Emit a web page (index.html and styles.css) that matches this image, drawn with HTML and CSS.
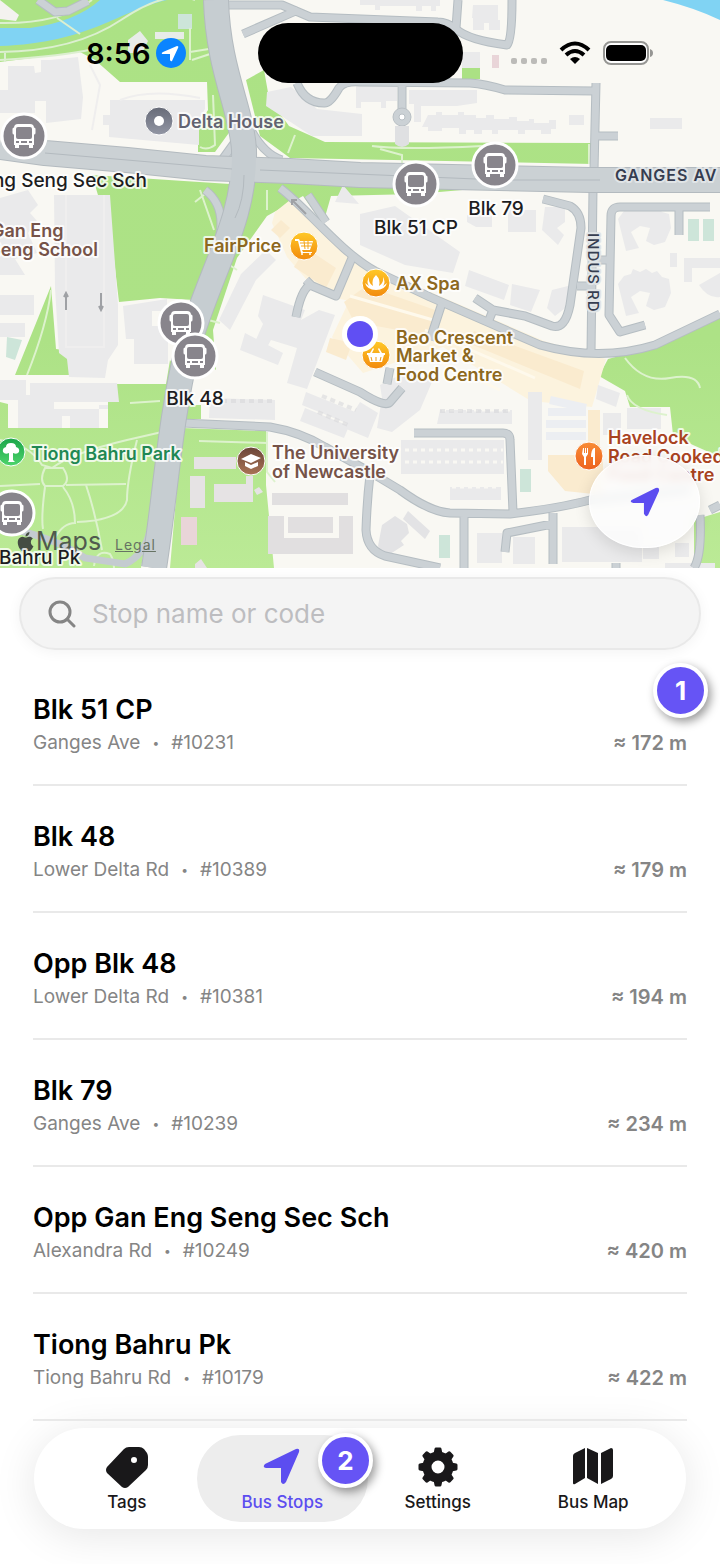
FILE: index.html
```html
<!DOCTYPE html>
<html lang="en">
<head>
    <meta charset="UTF-8">
    <meta name="viewport" content="width=device-width, initial-scale=1.0">
    <title>Bus Stops</title>
    <link rel="stylesheet" href="styles.css">
</head>
<body>
    <header class="map">
        <svg class="map-canvas" viewBox="0 0 720 568" role="img" aria-label="Map of nearby bus stops">
            <defs>
                <linearGradient id="gold" x2="0" y2="1"><stop stop-color="#ffc928"/><stop offset="1" stop-color="#f28a0d"/></linearGradient>
                <linearGradient id="slate" x2="0" y2="1"><stop stop-color="#676b78"/><stop offset="1" stop-color="#9296a4"/></linearGradient>
                <linearGradient id="brown" x2="0" y2="1"><stop stop-color="#6a4438"/><stop offset="1" stop-color="#a97455"/></linearGradient>
                <linearGradient id="orange" x2="0" y2="1"><stop stop-color="#f88c35"/><stop offset="1" stop-color="#ee621f"/></linearGradient>
                <linearGradient id="tree" x2="0" y2="1"><stop stop-color="#1ba54a"/><stop offset="1" stop-color="#4ed46b"/></linearGradient>
                <linearGradient id="park" gradientUnits="userSpaceOnUse" x2="0" y2="568"><stop stop-color="#ace285"/><stop offset=".6" stop-color="#ade286"/><stop offset="1" stop-color="#bbea96"/></linearGradient>
                <g id="bus">
                    <circle r="22" fill="#88858c" stroke="#fff" stroke-width="3"/>
                    <path d="M-10-7v4M10-7v4" stroke="#fff" stroke-width="3" stroke-linecap="round"/>
                    <path d="M-6-12H6q4 0 4 4V9H9v3H5V9H-5v3h-4V9h-1V-8q0-4 4-4Z" fill="#fff"/>
                    <rect x="-8" y="-9" width="16" height="12" rx="2" fill="#88858c"/>
                    <path d="M-8 6h3m2 0h6m2 0h3" stroke="#88858c" stroke-width="2"/>
                </g>
                <g id="tower">
                    <path d="M-25-16l6-8 7-2 2-5 7 3 6-3 6 4 5-2 5 6 7 2 2 14-6 14-11 3-8-4 4-13-10-2-9 6 8 16-13 3Z"/>
                </g>
            </defs>

            <rect width="720" height="568" fill="#f9f8f3"/>

            <!-- parks -->
            <g fill="url(#park)">
                <path d="M0 0H206L214 60 220 82H120L95 60 80 52 0 62Z"/>
                <path d="M207 82h14l10 48-16 22h-17v-27l10-15Z"/>
                <path d="M246 80l18-10 5 28 20 28 36 16 268 1v21l-303-6-30-22Z"/>
                <path d="M92 175l138 9-8 40-28 76-34-2-41 4-7-60Z"/>
                <path d="M252 182h222v7l-58 5-85 2-8 28-20-28-36 20-30 42-24 72 3 40-18-15 20-100Z"/>
                <path d="M51 286L15 375h54l1-24-14-2Z"/>
                <path d="M0 402l8 2v24h100v-44h58l4-24 6 10-35 198H0Z"/>
                <path d="M184 405h17v14h-18ZM182 428l84 3v54l8 83H170Z"/>
                <path d="M720 316c-30 18-60 30-112 43l-9 17 26 15 5 16h40l3 28 20 10 27 12ZM694 520l26-8v56h-26Z"/>
            </g>
            <path d="M0 0l19 15-3 6-16-2Z" fill="#f4f2ef"/>

            <!-- water -->
            <path d="M0 28h30Q75 22 100 0h67C120 10 90 43 0 46ZM663 0h57v20Q695 8 663 0Z" fill="#80d3f3"/>
            <path d="M57 18L80 34M0 23Q60 24 92 0M0 52Q75 51 121 20T195 0M0 60Q65 56 93 49M5 51v11" fill="none" stroke="#dcefd0" stroke-width="2"/>

            <!-- shopping and food area -->
            <path d="M275 212l15-12 64 59 190 82 62 18-14 48-61-6-88-54-80 26-31-36 17-36-30-7-32-37-15-34Z" fill="#fcf3de"/>
            <g fill="#faebcf">
                <path d="M281 220l9 8-10 10-9-8ZM306 248l30 20-10 20-32-21ZM344 302l22-16 75 26-10 24-77-14ZM474 331l110 40-4 18-112-46ZM330 338l22 5-6 17-20-8Z"/>
                <path d="M548 455h55v40l-38-4-17-20ZM588 410h12v42h-12Z"/>
            </g>
            <path d="M425 330l110 48M440 362l60 28M350 296l90 26" stroke="#fef9ec" stroke-width="3"/>

            <!-- buildings -->
            <g fill="#eaeaeb">
                <path d="M50 60l28-3 5 40-2 22-35 4v-22H35v12H0V90h8V66h26l1 7 6-1V60Z"/>
                <path d="M110 100h95v9l-6 10v26l-90-8v-12h-6v-10h7Z"/>
                <path d="M267 92l24-5 26 22 45 5v22h-50l-46-30Z"/>
                <path d="M360 0h80v6h-4v5h-5V6h-9v5h-6V6h-36v4h-5V5h-15ZM473 5h25v15h2v10h-11v-7h-5v7h-11V18h-1ZM360 86h37v15h-11v7h-5v-6h-20v6h-5V86Z"/>
                <path d="M415 90h62v13l-20 3h-36v16h-7v-18h-5V90ZM428 115h8v-3h6v3h16v-3h6v3h12v3h10v-3h8v4h15v-2h8v4h12v-2h5v4h15v-3h7v9h-5v5h-10v-4h-16v4h-7v-4h-20v4h-6v-4h-10v4h-8v-4h-8v4h-7v-6h-17v3h-14v-4h-6ZM569 115h15v10h-15ZM650 118h32v11h-32ZM462 52h18v16h-18Z"/>
                <path d="M360 214l35-8 65 46-7 21-48-8-45-20ZM343 185l16 19-24-2ZM467 215h25v12h-16l-9-5ZM508 210h28v22h-28ZM545 207h20v15l-8 6 7 7-6 10-16-15ZM469 270l40 15-5 15-39-14ZM512 284l28 6-9 22-21-7ZM552 290l16-4v20l-13 10-8-8Z"/>
                <path d="M0 198l28-8 10 15-8 8 7 8-9 12 9 20-22 6 10 16H0ZM0 295h34v20H0ZM0 323h25v14H0Z"/>
                <path d="M54 195h56l8 110v40l-10 15-3 18-36-1-2-18-8-6-4-65ZM123 306l44-7v12h-15v15h16v38h-34v-25h-8Z"/>
                <path d="M0 380h26v20H0ZM18 395h36v14h54v-4h-9v23H70v-12h-8v12H18ZM30 383h87l2 19H30Z"/>
                <path d="M241 274l25-24 10 10-20 20-26 50-11-10ZM263 295l42 15-4 10 18-10 16 5-28 74-20-6 10-35-26-8-5 9-12-5 9-20-5-8ZM245 333l38 20-5 12-38-15ZM210 398l65 2v20l-66-2Z"/>
                <path d="M306 392l54 22-4 13-54-22ZM305 408l44 18-5 12-44-17ZM380 385l30-15 22 12-12 28-28 22-15-4 5-30ZM360 402l18 11-10 25-24-10ZM440 410h72v14h-75ZM401 440h103v34h-103ZM450 487h51v13h-51ZM528 392h14v68h-14ZM598 385l22 8-4 14-20-8ZM603 413h18v22h-18ZM627 408h34v21h-34Z"/>
                <path d="M562 527h80v35h-80ZM477 533h25v30h-25ZM513 537h22v27h-22ZM643 545h16v14h-16ZM675 543h14v14h-14ZM665 563h50v5h-50Z"/>
                <path d="M684 258h36v10h-28v14h-8ZM699 285l21-12v24q-12 2-21-12ZM670 253h7v14h-7Z"/>
                <use href="#tower" x="643" y="235"/>
                <use href="#tower" x="643" y="300"/>
            </g>
            <g fill="#e3e3e5">
                <path d="M194 457h42v12h-42ZM190 476h15v32h-15ZM214 484h32v-8h7v26h-39ZM254 490l5-3 4 5-6 3ZM195 564l6-5 6 9h-12Z" fill="#e6e3e4"/>
                <path d="M272 493h76v12h-76ZM268 516h16v22h55v-22h14v38h-85ZM288 517h45v16h-45Z" fill="#e1dfe0"/>
                <path d="M382 525l13-9 12 8 2 9-8 8 3 4-20 13-6-12ZM408 511l22 20-5 8-22-20Z"/>
            </g>
            <path d="M462 68h18v11h-18Z" fill="#abe184"/>
            <path d="M492 55h7v13h-7ZM181 517h16v28h-16Z" fill="#e9d5d8"/>
            <path d="M7 337l15 3-7 20-9-3ZM688 219h11v22h-11ZM703 219h11v22h-11ZM520 469h11v23h-11ZM439 535h11v23h-11ZM178 14h14v15h-14Z" fill="#cde5d9"/>
            <path d="M155 32h29v7h-29ZM128 40l12-9 8 10-6 12h-14Z" fill="#e8ece8"/>
            <path d="M66 195v152h38V195M120 100q30-12 80-2M90 65l10 20-8 45" fill="none" stroke="#efeeee" stroke-width="2"/>
            <path d="M442 410h70M405 450h98M405 462h98M452 487h48" stroke="#f9f8f3" stroke-width="3" stroke-dasharray="4 4"/>
            <path d="M322 396l34 14M318 412l30 13M213 401h60M440 411h70" stroke="#d9d9dc" stroke-width="4" stroke-dasharray="5 4" opacity=".6"/>
            <path d="M550 400l36 8M548 412h38M546 424h40M546 436h40" stroke="#eceef2" stroke-width="8"/>

            <!-- footpaths -->
            <g fill="none" stroke="#ddf2cd" stroke-width="2">
                <path d="M0 440q30 5 42 25l10 3q20-15 75-28l35-8M45 468q-6 12 0 18h18q8-6 0-18ZM0 486l40-2M66 485l60-1M45 487q-4 30-2 42M63 487q12 15 12 36-12 0-20 15M86 485q10 30 16 65M137 440q-10 40-10 60-4 20-50 22M94 566q2-17 16-12 4 6 4 14M199 441l68 2M267 432v40l8 10"/>
                <path d="M200 190l14 40M195 202l10-8M130 403l30-2M27 375q20-50 24-85M267 190v20M225 262l12 8M208 320l12 3M627 395q5 15 40 20M625 358q18 25 45 20t30 10M213 95l2 50q-8 6-15 2"/>
                <path d="M372 146q30 4 110 0M480 146v18M380 149l22 6v8M295 135l-7 18M589 144v20M155 143M190 28v32M190 52l25-4M192 60l24-8"/>
            </g>

            <!-- minor roads -->
            <g class="road-edge">
                <path d="M38 0L55 12 68 11 88 1M228 5H282L310 17 438 22Q447 22 456 29 468 40 507 45 512 40 512 0M458 0L456 28M243 34L298 10"/>
                <path d="M297 83Q305 103 324 103 330 104 339 88 344 81 360 82L470 83Q485 84 505 90L595 91M596 83L594 170M596 136H618M402 83V112"/>
                <path d="M593 188L591 354M280 188C305 206 340 252 375 271L430 297 540 345Q600 362 655 345L720 314"/>
                <path d="M543 199L570 206Q581 212 581 228L570 305Q565 330 552 326L525 316 493 310 475 298M493 310L487 325M577 286H592M710 207H620Q611 207 611 216L609 315 620 332 645 325M593 260H610M679 208V235"/>
                <path d="M442 303L430 340M390 368L387 384M352 258L336 296 310 285Q301 290 296 317M306 280L313 287M315 372L360 392Q385 408 390 402L402 388"/>
                <path d="M182 423L270 427Q300 432 325 447L370 472 400 490Q430 512 450 513L510 514Q560 508 590 500L690 490M414 433H503Q510 433 510 440L513 512M464 513V568M370 475Q367 500 366 530 367 550 385 556L440 568M553 513V564M505 552L507 533 552 524M616 563v5M720 505L710 510M694 568Q702 555 700 515"/>
                <path d="M205 190Q225 205 220 235M308 195L326 222M222 160L240 135M252 132Q265 155 282 160"/>
            </g>
            <g class="road">
                <path d="M38 0L55 12 68 11 88 1M228 5H282L310 17 438 22Q447 22 456 29 468 40 507 45 512 40 512 0M458 0L456 28M243 34L298 10"/>
                <path d="M297 83Q305 103 324 103 330 104 339 88 344 81 360 82L470 83Q485 84 505 90L595 91M596 83L594 170M596 136H618M402 83V112"/>
                <path d="M593 188L591 354M280 188C305 206 340 252 375 271L430 297 540 345Q600 362 655 345L720 314"/>
                <path d="M543 199L570 206Q581 212 581 228L570 305Q565 330 552 326L525 316 493 310 475 298M493 310L487 325M577 286H592M710 207H620Q611 207 611 216L609 315 620 332 645 325M593 260H610M679 208V235"/>
                <path d="M442 303L430 340M390 368L387 384M352 258L336 296 310 285Q301 290 296 317M306 280L313 287M315 372L360 392Q385 408 390 402L402 388"/>
                <path d="M182 423L270 427Q300 432 325 447L370 472 400 490Q430 512 450 513L510 514Q560 508 590 500L690 490M414 433H503Q510 433 510 440L513 512M464 513V568M370 475Q367 500 366 530 367 550 385 556L440 568M553 513V564M505 552L507 533 552 524M616 563v5M720 505L710 510M694 568Q702 555 700 515"/>
                <path d="M205 190Q225 205 220 235M308 195L326 222M222 160L240 135M252 132Q265 155 282 160"/>
            </g>
            <circle cx="402" cy="117" r="9" fill="#cbd1d5" stroke="#b8bfc4"/>
            <circle cx="402" cy="117" r="3" fill="#fff" stroke="#b8bfc4"/>
            <path d="M395 126h14v18q-7 6-14 0Z" fill="#dfe0e2"/>
            <path d="M0 527Q50 535 85 558L125 564Q145 555 150 530" fill="none" stroke="#c4cbd0" stroke-width="7"/>

            <!-- main roads -->
            <g fill="none" stroke-linejoin="round">
                <path d="M0 147L45 153 127 160 205 168 290 171 360 175 590 180H720" stroke="#b3babf" stroke-width="26"/>
                <path d="M216 0C218 70 242 110 244 150 246 220 210 270 187 350 170 420 166 490 154 568" stroke="#b3babf" stroke-width="26"/>
                <path d="M0 147L45 153 127 160 205 168 290 171 360 175 590 180H720" stroke="#cbd1d4" stroke-width="24"/>
                <path d="M216 0C218 70 242 110 244 150 246 220 210 270 187 350 170 420 166 490 154 568" stroke="#c6cdd1" stroke-width="24"/>
                <path d="M45 153L127 160 232 169M260 170L500 180H600M244 175Q244 200 235 218" stroke="#b3babf"/>
            </g>
            <path d="M66 310v-17m-2 4l2-4 2 4M101 293v17m-2-4l2 4 2-4M306 214l-14-14m0 5v-5h5" fill="none" stroke="#9fa1a5" stroke-width="2"/>

            <!-- street names -->
            <text class="street" x="615" y="181">GANGES AV</text>
            <text class="street small" transform="translate(588 233) rotate(90)">INDUS RD</text>

            <!-- places -->
            <g stroke="#fff" stroke-width="1">
                <circle cx="159" cy="121" r="14" fill="url(#slate)"/>
                <circle cx="304" cy="246" r="14" fill="url(#gold)"/>
                <circle cx="376" cy="283" r="14" fill="url(#gold)"/>
                <circle cx="376" cy="355" r="14" fill="url(#gold)"/>
                <circle cx="251" cy="461" r="14" fill="url(#brown)"/>
                <circle cx="589" cy="456" r="14" fill="url(#orange)"/>
                <circle cx="11" cy="452" r="14" fill="url(#tree)"/>
            </g>
            <g fill="#fff">
                <circle cx="159" cy="121" r="5"/>
                <path d="M295 239h4l1 2h13l-3 9h-8l1 2h9v1h-11l-3-12h-3Z"/>
                <circle cx="302" cy="254" r="1"/><circle cx="310" cy="254" r="1"/>
                <path d="M376 275q5 5 3 11 5-3 4-9 3 5 0 9l4-3q-2 7-11 7t-11-7l4 3q-3-4 0-9-1 6 4 9-2-6 3-11Z"/>
                <path d="M367 353h3l3-5 1 1-2 4h8l-2-4 1-1 3 5h3v2h-1l-2 7h-12l-2-7h-1Z"/>
                <path d="M241 459l10-5 10 4-10 5ZM245 462l6 3 7-3v4l-7 3-6-3Z"/>
                <path d="M583 448h1v5h1v-5h1v5h1v-5h1v6l-2 3v8h-2v-8l-2-3ZM594 448q-3 2-3 9h2v8h2v-17Z"/>
                <path d="M3 452q-1-4 3-5 0-4 5-4t5 4q4 1 3 5-2 3-6 1v7l2 2H8l1-2v-7q-4 2-6-1Z"/>
            </g>
            <path d="M300 243h12m-11 3h10m-7-5l1 8m3-8v8" stroke="#f3a51b" fill="none"/>
            <path d="M371 357l1 4m4-4v4m5-4l-1 4" stroke="#ee9a14"/>

            <g class="place">
                <text x="178" y="128" fill="#626371">Delta House</text>
                <text x="204" y="252" fill="#8d6820">FairPrice</text>
                <text x="396" y="290" fill="#8d6820">AX Spa</text>
                <text fill="#8d6820"><tspan x="396" y="344">Beo Crescent</tspan><tspan x="396" y="362">Market &amp;</tspan><tspan x="396" y="381">Food Centre</tspan></text>
                <text fill="#765349"><tspan x="-9" y="237">Gan Eng</tspan><tspan x="-11" y="256">Seng School</tspan></text>
                <text x="31" y="460" fill="#1f8853">Tiong Bahru Park</text>
                <text fill="#765349"><tspan x="272" y="459">The University</tspan><tspan x="272" y="478">of Newcastle</tspan></text>
                <text fill="#a9431f"><tspan x="608" y="444">Havelock</tspan><tspan x="608" y="463">Road Cooked</tspan><tspan x="608" y="481">Food Centre</tspan></text>
            </g>

            <!-- bus stops -->
            <use href="#bus" x="24" y="136"/>
            <use href="#bus" x="416" y="184"/>
            <use href="#bus" x="495" y="165"/>
            <use href="#bus" x="181" y="323"/>
            <use href="#bus" x="195" y="356"/>
            <use href="#bus" x="12" y="513"/>
            <g class="stop">
                <text x="147" y="187" text-anchor="end">Gan Eng Seng Sec Sch</text>
                <text x="416" y="234" text-anchor="middle">Blk 51 CP</text>
                <text x="496" y="215" text-anchor="middle">Blk 79</text>
                <text x="195" y="405" text-anchor="middle">Blk 48</text>
            </g>
            <circle cx="360" cy="334" r="18" fill="#fff"/>
            <circle cx="360" cy="334" r="13" fill="#604ff3"/>

            <!-- map provider -->
            <path transform="translate(16 532) scale(.8)" fill="#454c43" d="M12.152 6.896c-.948 0-2.415-1.078-3.96-1.04-2.04.027-3.91 1.183-4.961 3.014-2.117 3.675-.546 9.103 1.519 12.09 1.013 1.454 2.208 3.09 3.792 3.039 1.52-.065 2.09-.987 3.935-.987 1.831 0 2.35.987 3.96.948 1.637-.026 2.676-1.48 3.676-2.948 1.156-1.688 1.636-3.325 1.662-3.415-.039-.013-3.182-1.221-3.22-4.857-.026-3.04 2.48-4.494 2.597-4.559-1.429-2.09-3.623-2.324-4.39-2.376-2-.156-3.675 1.09-4.61 1.09zM15.53 3.83c.843-1.012 1.4-2.427 1.245-3.83-1.207.052-2.662.805-3.532 1.818-.78.896-1.454 2.338-1.273 3.714 1.338.104 2.715-.688 3.559-1.701"/>
            <text class="provider" x="36" y="550">Maps</text>
            <text class="stop" x="-1" y="564">Bahru Pk</text>
        </svg>

        <div class="status">
            <div class="clock">
                <span>8:56</span>
                <svg width="30" height="30" viewBox="0 0 30 30"><circle cx="15" cy="15" r="15" fill="#0a84ff"/><path d="M6 16Q5 15 7 14L21 8q2 0 1 2l-6 13q-1 1-2-1v-6Z" fill="#fff"/></svg>
            </div>
            <div class="island"></div>
            <div class="signals">
                <svg width="36" height="8" viewBox="0 0 36 8" fill="#bcbbb8"><rect y="1" width="6" height="6" rx="2"/><rect x="10" y="1" width="6" height="6" rx="2"/><rect x="20" y="1" width="6" height="6" rx="2"/><rect x="30" y="1" width="6" height="6" rx="2"/></svg>
                <svg width="32" height="24" viewBox="0 0 32 24" fill="none" stroke="#000" stroke-width="4"><path d="M2 9Q16-4 30 9M7 14q9-8 18 0"/><path d="M11 18q5-4 10 0l-5 5Z" fill="#000" stroke="none"/></svg>
                <svg width="51" height="24" viewBox="0 0 51 24"><rect x="1" y="1" width="44" height="22" rx="7" fill="#fff" stroke="#969693" stroke-width="2"/><rect x="3" y="4" width="40" height="16" rx="5"/><path d="M47 8q3 1 3 4t-3 4Z" fill="#969693"/></svg>
            </div>
        </div>
        <a class="legal" href="#legal">Legal</a>
        <button class="locate" type="button" aria-label="My location">
            <svg width="30" height="30" viewBox="0 0 28 28"><path d="M2 12L24 1q4-1 3 3L17 26q-2 3-4-1V15H3q-4-1-1-3Z" fill="#5c4df0"/></svg>
        </button>
    </header>

    <main>
        <label class="search">
            <svg width="28" height="28" viewBox="0 0 28 28" fill="none" stroke="#858585" stroke-width="3" stroke-linecap="round"><circle cx="12" cy="12" r="10"/><path d="M19 19l7 7"/></svg>
            <input type="search" placeholder="Stop name or code" aria-label="Stop name or code">
        </label>
        <ul class="stops">
            <li class="stop-row">
                <h2>Blk 51 CP</h2>
                <p><span>Ganges Ave</span><i>•</i><span>#10231</span><b>≈ 172 m</b></p>
                <span class="badge badge-list">1</span>
            </li>
            <li class="stop-row">
                <h2>Blk 48</h2>
                <p><span>Lower Delta Rd</span><i>•</i><span>#10389</span><b>≈ 179 m</b></p>
            </li>
            <li class="stop-row">
                <h2>Opp Blk 48</h2>
                <p><span>Lower Delta Rd</span><i>•</i><span>#10381</span><b>≈ 194 m</b></p>
            </li>
            <li class="stop-row">
                <h2>Blk 79</h2>
                <p><span>Ganges Ave</span><i>•</i><span>#10239</span><b>≈ 234 m</b></p>
            </li>
            <li class="stop-row">
                <h2>Opp Gan Eng Seng Sec Sch</h2>
                <p><span>Alexandra Rd</span><i>•</i><span>#10249</span><b>≈ 420 m</b></p>
            </li>
            <li class="stop-row">
                <h2>Tiong Bahru Pk</h2>
                <p><span>Tiong Bahru Rd</span><i>•</i><span>#10179</span><b>≈ 422 m</b></p>
            </li>
        </ul>
    </main>

    <nav class="tabs">
        <a class="tab" href="#tags">
            <svg width="44" height="44" viewBox="0 0 44 44"><path fill="#19181a" fill-rule="evenodd" d="M24 2h10q3 0 5 2l3 4q1 2 1 4v8q0 3-2 5L23 42q-3 2-6 0L2 28q-2-3 0-6L19 4q2-2 5-2Zm5 10a3 3 0 1 0 0 6 3 3 0 0 0 0-6Z"/></svg>
            <span>Tags</span>
        </a>
        <a class="tab active" href="#stops">
            <svg width="44" height="44" viewBox="0 0 44 44"><path fill="#5c4df0" d="M5 19L36 4q4-1 3 3L26 37q-3 4-5 0V23H6q-4-1-1-4Z"/></svg>
            <span>Bus Stops</span>
            <span class="badge badge-tab">2</span>
        </a>
        <a class="tab" href="#settings">
            <svg width="44" height="44" viewBox="0 0 44 44" fill="#19181a"><g stroke="#19181a" stroke-width="3" stroke-linejoin="round"><path id="tooth" d="M19 9l1-5h4l1 5Z"/><use href="#tooth" transform="rotate(45 22 22)"/><use href="#tooth" transform="rotate(90 22 22)"/><use href="#tooth" transform="rotate(135 22 22)"/><use href="#tooth" transform="rotate(180 22 22)"/><use href="#tooth" transform="rotate(225 22 22)"/><use href="#tooth" transform="rotate(270 22 22)"/><use href="#tooth" transform="rotate(315 22 22)"/></g><circle cx="22" cy="22" r="11" fill="none" stroke="#19181a" stroke-width="9"/></svg>
            <span>Settings</span>
        </a>
        <a class="tab" href="#map">
            <svg width="44" height="44" viewBox="0 0 44 44" fill="#19181a"><path d="M2 11q0-2 2-3l10-5v30L4 39q-2 1-2-1ZM16 3l11 5v31l-11-6ZM30 8l10-5q2 0 2 2v26q0 2-2 3l-10 5Z"/></svg>
            <span>Bus Map</span>
        </a>
    </nav>
</body>
</html>
```
FILE: styles.css
```css
* {
    margin: 0;
    padding: 0;
    box-sizing: border-box;
}
body {
    background: #fff;
    color: #000;
    font-family: Inter, Roboto, sans-serif;
    overflow-x: hidden;
}
.map {
    position: relative;
}
.map-canvas {
    display: block;
    width: 100%;
}
.road-edge, .road {
    fill: none;
    stroke: #b5bdc2;
    stroke-width: 9px;
    stroke-linejoin: round;
}
.road {
    stroke: #cbd1d5;
    stroke-width: 7px;
}
.street, .place, .stop {
    font-size: 18px;
    font-weight: 600;
    paint-order: stroke;
    stroke: rgba(255, 255, 255, 0.8);
    stroke-width: 4px;
    stroke-linejoin: round;
}
.street {
    font-size: 16px;
    fill: #363d50;
    stroke: #e0e4e6;
    letter-spacing: 1px;
}
.small {
    font-size: 15px;
    font-weight: 500;
}
.stop {
    font-size: 19px;
    font-weight: 500;
    fill: #1d1d1f;
}
.provider {
    font-size: 25px;
    fill: #505a4e;
}
.status {
    position: absolute;
    top: 23px;
    left: 0;
    width: 100%;
    display: grid;
    grid-template-columns: 1fr 205px 1fr;
    align-items: center;
}
.clock, .signals {
    display: flex;
    align-items: center;
}
.clock {
    justify-content: flex-end;
    gap: 5px;
    padding-right: 72px;
    font-size: 29px;
    font-weight: 600;
}
.island {
    height: 60px;
    border-radius: 30px;
    background: #000;
}
.signals {
    gap: 12px;
    padding-left: 48px;
}
.signals svg:first-child {
    align-self: flex-end;
}
.legal {
    position: absolute;
    left: 115px;
    bottom: 15px;
    color: #667363;
    font-size: 14px;
    letter-spacing: 1px;
}
.locate {
    position: absolute;
    right: 20px;
    bottom: 20px;
    width: 111px;
    height: 93px;
    display: flex;
    align-items: center;
    justify-content: center;
    border: 1px solid #fff;
    border-radius: 54px / 46px;
    background: rgba(253, 253, 253, 0.85);
    backdrop-filter: blur(5px);
    box-shadow: 0 4px 16px rgba(0, 0, 0, 0.12);
}
.search {
    display: flex;
    align-items: center;
    gap: 16px;
    height: 73px;
    margin: 9px 19px;
    padding: 0 27px;
    border: 2px solid #e9e9e9;
    border-radius: 37px;
    background: #f4f4f4;
    box-shadow: 0 2px 14px rgba(0, 0, 0, 0.05);
}
.search input {
    flex: 1;
    min-width: 0;
    border: 0;
    outline: 0;
    background: none;
    font: 26px Inter, Roboto, sans-serif;
}
.search input::placeholder {
    color: #bdbdc0;
}
.stops {
    list-style: none;
    padding: 0 33px;
}
.stop-row {
    position: relative;
    padding: 34px 0 29px;
    border-bottom: 2px solid #e9e9e9;
}
.stop-row h2 {
    font-size: 27px;
    font-weight: 600;
    line-height: 34px;
}
.stop-row p {
    display: flex;
    gap: 12px;
    margin-top: 4px;
    color: #858585;
    font-size: 19px;
    line-height: 24px;
}
.stop-row i {
    font-size: 12px;
    font-style: normal;
}
.stop-row b {
    margin-left: auto;
    font-size: 20px;
    font-weight: 600;
}
.badge {
    position: absolute;
    width: 55px;
    height: 55px;
    border: 4px solid #fff;
    border-radius: 50%;
    background: #6654f5;
    color: #fff;
    font-size: 26px;
    font-weight: 700;
    line-height: 47px;
    text-align: center;
    box-shadow: 3px 4px 10px rgba(0, 0, 0, 0.4);
}
.badge-list {
    top: 4px;
    right: -21px;
}
.tabs {
    display: grid;
    grid-template-columns: repeat(4, 1fr);
    margin: 7px 34px 35px;
    padding: 7px 15px;
    border-radius: 51px;
    background: #fff;
    box-shadow: 0 6px 44px rgba(0, 0, 0, 0.1);
}
.tab {
    position: relative;
    display: flex;
    flex-direction: column;
    align-items: center;
    height: 87px;
    margin: 0 -8px;
    padding-top: 10px;
    border-radius: 44px;
    color: #19181a;
    font-size: 17px;
    font-weight: 500;
    line-height: 26px;
    text-decoration: none;
}
.active {
    background: #ededed;
    color: #5c4df0;
}
.badge-tab {
    top: -2px;
    right: -5px;
}
```
